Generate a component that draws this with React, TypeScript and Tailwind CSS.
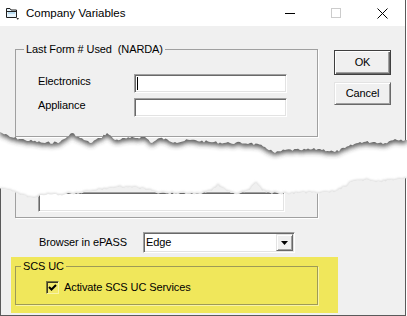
import React from "react";

type Pt = [number, number];

const ui = "font-['Liberation_Sans',Arial,sans-serif] text-[11px] tracking-[-0.1px] text-black";

// rough outline of the tear, y is relative to the top of the overlay (page y 125)
const upperEdge: Pt[] = [
  [0, 7], [10, 12], [25, 15], [45, 18], [60, 17], [67, 12], [72, 8], [80, 13], [90, 18],
  [100, 13], [107, 8], [115, 15], [130, 13], [145, 12], [152, 18], [160, 13], [175, 17],
  [190, 15], [210, 17], [230, 18], [250, 18], [265, 22], [275, 28], [285, 25], [300, 25],
  [320, 24], [335, 27], [345, 23], [360, 17], [375, 17], [385, 18], [395, 14], [407, 15],
];

const lowerEdge: Pt[] = [
  [0, 63], [10, 65], [20, 70], [33, 73], [40, 70], [60, 70], [80, 68], [93, 66], [110, 63],
  [130, 62], [148, 65], [160, 68], [200, 69], [212, 66], [218, 60], [225, 65], [235, 69],
  [250, 65], [256, 58], [262, 66], [280, 69], [300, 68], [330, 68], [345, 62], [352, 57],
  [365, 55], [380, 57], [395, 55], [407, 54],
];

function jag(points: Pt[], seed: number, amp: number): Pt[] {
  let s = seed;
  const rnd = () => {
    s = (s * 9301 + 49297) % 233280;
    return s / 233280;
  };
  const out: Pt[] = [];
  for (let i = 0; i < points.length - 1; i++) {
    const [x0, y0] = points[i];
    const [x1, y1] = points[i + 1];
    const steps = Math.max(1, Math.round((x1 - x0) / 2));
    for (let k = 0; k < steps; k++) {
      const t = k / steps;
      const j = k === 0 ? 0 : (rnd() - 0.5) * amp;
      out.push([x0 + (x1 - x0) * t, y0 + (y1 - y0) * t + j]);
    }
  }
  out.push(points[points.length - 1]);
  return out;
}

const toPath = (pts: Pt[]) => pts.map(([x, y], i) => `${i ? "L" : "M"}${x.toFixed(1)} ${y.toFixed(1)}`).join(" ");

function TornGap() {
  const up = jag(upperEdge, 7, 2.6);
  const low = jag(lowerEdge, 19, 2.2);
  const gap = toPath(up) + " " + toPath([...low].reverse()).replace("M", "L") + " Z";
  const upperPiece = "M0 -20 " + toPath(up).replace("M", "L") + " L407 -20 Z";
  return (
    <svg className="absolute left-0 top-[125px]" width="407" height="80" viewBox="0 0 407 80">
      <defs>
        <filter id="tornBlur" x="-10%" y="-50%" width="120%" height="200%">
          <feGaussianBlur stdDeviation="2.8" />
        </filter>
        <filter id="edgeBlur" x="-10%" y="-50%" width="120%" height="200%">
          <feGaussianBlur stdDeviation="0.8" />
        </filter>
        <clipPath id="gapClip">
          <path d={gap} />
        </clipPath>
      </defs>
      <path d={gap} fill="#ffffff" />
      <g clipPath="url(#gapClip)">
        <path d={upperPiece} transform="translate(0,3)" fill="#2e2e2e" opacity="0.8" filter="url(#tornBlur)" />
        <path d={toPath(low)} fill="none" stroke="#d6d6d6" strokeWidth="2" filter="url(#edgeBlur)" />
      </g>
    </svg>
  );
}

function FolderIcon() {
  return (
    <svg className="ml-[5px]" width="14" height="13" viewBox="0 0 14 13">
      <path d="M1.5 1.5 H5 L6 3 H11.5 V10.5 H1.5 Z" fill="#e6f3fb" stroke="#1f1f1f" />
      <path d="M1.5 4.5 H11.5" stroke="#1f1f1f" />
      <path d="M3 6 H10" stroke="#8cc4e6" />
      <path d="M11.5 11 L14 11 L12.75 13 Z" fill="#333" />
    </svg>
  );
}

function TextBox({ width, height, cursor }: { width: string; height: string; cursor?: boolean }) {
  return (
    <div
      className={`${width} ${height} flex items-center bg-white border border-t-[#a0a0a0] border-l-[#a0a0a0] border-b-white border-r-white shadow-[inset_1px_1px_0_#696969,inset_-1px_-1px_0_#e3e3e3]`}
    >
      {cursor && <span className="block ml-[2px] w-px h-[13px] bg-black" />}
    </div>
  );
}

function FieldRow({ label, cursor }: { label: string; cursor?: boolean }) {
  return (
    <div className="flex items-start">
      <span className={`w-[96px] leading-[15px] ${ui}`}>{label}</span>
      <TextBox width="w-[153px]" height="h-[19px]" cursor={cursor} />
    </div>
  );
}

export default function App() {
  return (
    <div className="relative w-[407px] h-[316px] bg-white overflow-hidden">
      <div className="w-[406px] h-[316px] flex flex-col bg-[#f0f0f0] border-r border-b border-[#5a5a5a]">
        {/* Title bar */}
        <div className="h-[26px] shrink-0 flex items-center bg-white">
          <FolderIcon />
          <span className="ml-[7px] font-['Liberation_Sans',Arial,sans-serif] text-[11.5px] leading-[26px] text-black">
            Company Variables
          </span>
          <div className="ml-auto flex h-full">
            <div className="w-[46px] flex items-center justify-center">
              <span className="block w-[10px] h-px bg-black" />
            </div>
            <div className="w-[46px] flex items-center justify-center">
              <span className="block w-[10px] h-[10px] border border-[#cccccc]" />
            </div>
            <div className="w-[46px] flex items-center justify-center">
              <svg width="11" height="11" viewBox="0 0 11 11">
                <path d="M0.5 0.5 L10.5 10.5 M10.5 0.5 L0.5 10.5" stroke="#000" strokeWidth="1" />
              </svg>
            </div>
          </div>
        </div>

        {/* Upper part */}
        <div className="flex items-start pl-[15px] pt-[15px]">
          <fieldset className="w-[303px] h-[96px] border border-[#a0a0a0] shadow-[1px_1px_0_#fff]">
            <legend className={`ml-[8px] px-[2px] whitespace-pre leading-[16px] ${ui}`}>Last Form # Used  (NARDA)</legend>
            <div className="pl-[22px] pt-[17px] flex flex-col gap-[5px]">
              <FieldRow label="Electronics" cursor />
              <FieldRow label="Appliance" />
            </div>
          </fieldset>
          <div className="ml-[16px] mt-[9px] flex flex-col gap-[7px]">
            <button className="w-[57px] h-[25px] flex items-center justify-center bg-[#f0f0f0] border border-[#3f3f3f] shadow-[inset_1px_1px_0_#fff,inset_-1px_-1px_0_#696969,inset_-2px_-2px_0_#a0a0a0]">
              <span className={`leading-[15px] ${ui}`}>OK</span>
            </button>
            <button className="w-[57px] h-[23px] flex items-center justify-center bg-[#f0f0f0] border border-t-[#e3e3e3] border-l-[#e3e3e3] border-b-[#696969] border-r-[#696969] shadow-[inset_1px_1px_0_#fff,inset_-1px_-1px_0_#a0a0a0]">
              <span className={`leading-[15px] ${ui}`}>Cancel</span>
            </button>
          </div>
        </div>

        {/* Lower part */}
        <div className="flex-1 flex flex-col border-l border-[#5a5a5a]">
          <fieldset className="ml-[14px] mt-[23px] w-[303px] h-[58px] border border-[#a0a0a0] shadow-[1px_1px_0_#fff]">
            <div className="ml-[22px] mt-[31px]">
              <TextBox width="w-[247px]" height="h-[20px]" />
            </div>
          </fieldset>

          <div className="mt-[14px] ml-[38px] h-[21px] flex items-center">
            <span className={`w-[104px] leading-[15px] ${ui}`}>Browser in ePASS</span>
            <div className="w-[152px] h-[21px] p-px flex bg-white border border-t-[#a0a0a0] border-l-[#a0a0a0] border-b-white border-r-white shadow-[inset_1px_1px_0_#696969,inset_-1px_-1px_0_#e3e3e3]">
              <span className={`flex-1 pl-px bg-white leading-[17px] ${ui}`}>Edge</span>
              <div className="w-[17px] flex items-center justify-center bg-[#f0f0f0] border border-t-[#e3e3e3] border-l-[#e3e3e3] border-b-[#696969] border-r-[#696969] shadow-[inset_1px_1px_0_#fff,inset_-1px_-1px_0_#a0a0a0]">
                <svg width="7" height="4" viewBox="0 0 7 4">
                  <path d="M0 0 H7 L3.5 4 Z" fill="#000" />
                </svg>
              </div>
            </div>
          </div>

          <div className="mt-[4px] ml-[10px] w-[327px] h-[56px] pl-[4px] pt-[1px] bg-[#f0e75b]">
            <fieldset className="w-[303px] h-[47px] border border-[#9e9a56] shadow-[1px_1px_0_#f8f3a8]">
              <legend className={`ml-[5px] px-[2px] leading-[16px] ${ui}`}>SCS UC</legend>
              <div className="mt-[6px] pl-[30px] flex items-center gap-[5px]">
                <span className="w-[13px] h-[13px] flex items-center justify-center bg-[#f3ea6a] border border-t-[#7a7640] border-l-[#7a7640] border-b-[#f8f3a8] border-r-[#f8f3a8] shadow-[inset_1px_1px_0_#3b3920]">
                  <svg width="11" height="11" viewBox="0 0 11 11">
                    <path d="M2 5 L4.5 7.5 L9 3" fill="none" stroke="#000" strokeWidth="2" />
                  </svg>
                </span>
                <span className={`leading-[15px] ${ui}`}>Activate SCS UC Services</span>
              </div>
            </fieldset>
          </div>
        </div>
      </div>

      <TornGap />
    </div>
  );
}
